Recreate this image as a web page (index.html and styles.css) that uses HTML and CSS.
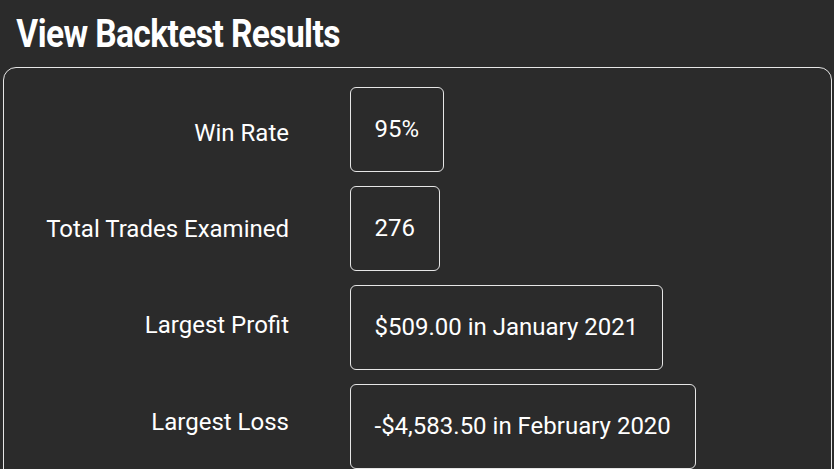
FILE: index.html
```html
<!DOCTYPE html>
<html>
<head>
<meta charset="utf-8">
<link rel="stylesheet" href="styles.css">
</head>
<body>
<h1 class="title">View Backtest Results</h1>
<div class="panel">
  <div class="labels">
    <div class="label">Win Rate</div>
    <div class="label">Total Trades Examined</div>
    <div class="label">Largest Profit</div>
    <div class="label">Largest Loss</div>
  </div>
  <div class="values">
    <div class="value">95%</div>
    <div class="value">276</div>
    <div class="value">$509.00 in January 2021</div>
    <div class="value">-$4,583.50 in February 2020</div>
  </div>
</div>
</body>
</html>
```
FILE: styles.css
```css
html, body {
  margin: 0;
  padding: 0;
  background: #2b2b2b;
  overflow: hidden;
}
body {
  width: 834px;
  height: 469px;
  font-family: Roboto, "Liberation Sans", sans-serif;
  color: #ffffff;
}
.title {
  margin: 0;
  padding: 10.5px 0 0 19px;
  height: 54px;
  box-sizing: border-box;
  font-size: 39px;
  font-weight: 700;
  line-height: 46px;
  letter-spacing: -0.7px;
  transform: scaleX(0.86);
  transform-origin: left center;
  white-space: nowrap;
}
.panel {
  margin: 13px 2px 0 3px;
  height: 420px;
  border: 1.5px solid #e6e6e6;
  border-radius: 13px;
  box-sizing: border-box;
  display: flex;
  padding: 18.5px 0 0 0;
}
.labels {
  width: 285px;
  display: flex;
  flex-direction: column;
  margin-top: -2px;
}
.label {
  height: 96.3px;
  display: flex;
  align-items: center;
  justify-content: flex-end;
  font-size: 24px;
}
.values {
  margin-left: 60.5px;
  display: flex;
  flex-direction: column;
  align-items: flex-start;
  gap: 14px;
}
.value {
  height: 85px;
  box-sizing: border-box;
  border: 1.5px solid #e6e6e6;
  border-radius: 6px;
  padding: 0 24px;
  display: flex;
  align-items: center;
  font-size: 24px;
  white-space: nowrap;
}
```
